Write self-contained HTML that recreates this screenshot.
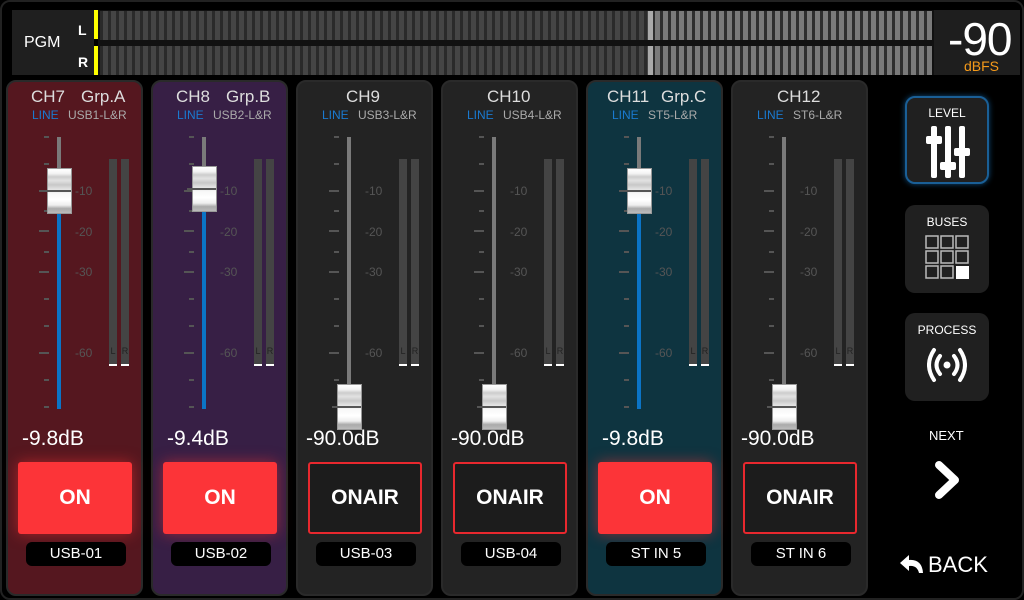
<!DOCTYPE html><html><head><meta charset="utf-8"><style>
*{margin:0;padding:0;box-sizing:border-box}
body{width:1024px;height:600px;background:#000;font-family:"Liberation Sans",sans-serif;color:#fff;position:relative;overflow:hidden}
.a{position:absolute}
.frame{left:0;top:0;width:1024px;height:600px;border:2px solid #222;border-radius:10px}
.pgm{left:12px;top:10px;width:82px;height:65px;background:#1f1f1f}
.bar{left:100px;width:832px;height:29px;background:repeating-linear-gradient(90deg,#2a2a2a 0 3px,#454545 3px 8px)}
.bar2{left:652px;width:280px;height:29px;background:repeating-linear-gradient(90deg,#2e2e2e 0 3px,#7a7a7a 3px 8px)}
.strip{top:80px;width:137px;height:516px;border:2px solid #2a2a2a;border-radius:10px;background:#232323}
.s{position:absolute;left:0;top:0;width:137px;height:516px}
.hd{position:absolute;top:5px;font-size:17px;color:#ddd}
.sub{position:absolute;top:26px;font-size:12px;color:#aaa}
.line{color:#1a7ad0}
.tk{position:absolute;height:2px;background:#555}
.trk{position:absolute;left:49px;top:55px;width:4px;height:272px;background:#7a7a7a}
.blue{position:absolute;left:49px;width:4px;background:#0b74c6}
.knob{position:absolute;left:39px;width:25px;height:46px;background:linear-gradient(#fff 0,#f4f4f4 10%,#ccc 18%,#e2e2e2 26%,#c8c8c8 36%,#ddd 44%,#f8f8f8 56%,#fff 70%,#eee 82%,#aaa 90%,#bbb 100%);border:1px solid #999}
.knob:after{content:"";position:absolute;left:-6px;right:0;top:21px;height:2px;background:#555}
.lb{position:absolute;left:67px;font-size:12px;color:#555}
.mt{position:absolute;top:77px;width:8px;height:207px;background:#444;border-bottom:2px solid #fff;font-size:9px;color:#222;text-align:center;padding-top:187px}
.db{position:absolute;left:14px;top:345px;font-size:21px}
.btn{position:absolute;left:10px;top:380px;width:114px;height:72px;border-radius:3px;font-weight:bold;font-size:21px;display:flex;align-items:center;justify-content:center}
.on{background:#fc3438;box-shadow:0 0 14px rgba(255,50,50,.5)}
.oa{border:2px solid #e8282e;background:#1c1c1c}
.pill{position:absolute;left:18px;top:460px;width:100px;height:24px;background:#000;border-radius:6px;font-size:15px;text-align:center;line-height:24px}
.rb{left:905px;width:84px;height:88px;background:#202020;border-radius:10px;font-size:12px;text-align:center;padding-top:10px}
</style></head><body>
<div class="a frame"></div>
<div class="a pgm"><div class="a" style="left:12px;top:24px;font-size:16px">PGM</div><div class="a" style="left:66px;top:12px;font-size:14px;font-weight:bold">L</div><div class="a" style="left:66px;top:44px;font-size:14px;font-weight:bold">R</div></div>
<div class="a" style="left:94px;top:10px;width:4px;height:29px;background:#ff0"></div>
<div class="a" style="left:94px;top:46px;width:4px;height:29px;background:#ff0"></div>
<div class="a" style="left:98px;top:10px;width:836px;height:65px;background:#111"></div>
<div class="a bar" style="top:11px"></div><div class="a bar" style="top:46px"></div>
<div class="a bar2" style="top:11px"></div><div class="a bar2" style="top:46px"></div>
<div class="a" style="left:648px;top:11px;width:5px;height:29px;background:#aaa"></div>
<div class="a" style="left:648px;top:46px;width:5px;height:29px;background:#aaa"></div>
<div class="a" style="left:934px;top:10px;width:86px;height:65px;background:#1e1e1e"></div>
<div class="a" style="left:948px;top:12px;font-size:46px;letter-spacing:-1px">-90</div>
<div class="a" style="left:964px;top:58px;font-size:14px;color:#f59a1a">dBFS</div>

<div class="a strip" style="left:6px;background:#55171f"><div class="s">
<div class="hd" style="left:23px">CH7</div><div class="hd" style="left:73px">Grp.A</div>
<div class="sub" style="left:24px"><span class="line">LINE</span></div><div class="sub" style="left:60px">USB1-L&amp;R</div>
<div class="tk" style="left:36px;top:54px;width:5px"></div><div class="tk" style="left:36px;top:81px;width:5px"></div><div class="tk" style="left:31px;top:108px;width:10px"></div><div class="tk" style="left:36px;top:128px;width:5px"></div><div class="tk" style="left:31px;top:148px;width:10px"></div><div class="tk" style="left:36px;top:169px;width:5px"></div><div class="tk" style="left:31px;top:189px;width:10px"></div><div class="tk" style="left:36px;top:216px;width:5px"></div><div class="tk" style="left:36px;top:243px;width:5px"></div><div class="tk" style="left:31px;top:270px;width:10px"></div><div class="tk" style="left:36px;top:297px;width:5px"></div><div class="tk" style="left:36px;top:324px;width:5px"></div>
<div class="trk"></div><div class="blue" style="top:120px;height:207px"></div>
<div class="lb" style="top:102px">-10</div><div class="lb" style="top:143px">-20</div><div class="lb" style="top:183px">-30</div><div class="lb" style="top:264px">-60</div>
<div class="knob" style="top:86px"></div>
<div class="mt" style="left:101px">L</div><div class="mt" style="left:113px">R</div>
<div class="db">-9.8dB</div><div class="btn on">ON</div><div class="pill">USB-01</div></div></div>

<div class="a strip" style="left:151px;background:#371f45"><div class="s">
<div class="hd" style="left:23px">CH8</div><div class="hd" style="left:73px">Grp.B</div>
<div class="sub" style="left:24px"><span class="line">LINE</span></div><div class="sub" style="left:60px">USB2-L&amp;R</div>
<div class="tk" style="left:36px;top:54px;width:5px"></div><div class="tk" style="left:36px;top:81px;width:5px"></div><div class="tk" style="left:31px;top:108px;width:10px"></div><div class="tk" style="left:36px;top:128px;width:5px"></div><div class="tk" style="left:31px;top:148px;width:10px"></div><div class="tk" style="left:36px;top:169px;width:5px"></div><div class="tk" style="left:31px;top:189px;width:10px"></div><div class="tk" style="left:36px;top:216px;width:5px"></div><div class="tk" style="left:36px;top:243px;width:5px"></div><div class="tk" style="left:31px;top:270px;width:10px"></div><div class="tk" style="left:36px;top:297px;width:5px"></div><div class="tk" style="left:36px;top:324px;width:5px"></div>
<div class="trk"></div><div class="blue" style="top:120px;height:207px"></div>
<div class="lb" style="top:102px">-10</div><div class="lb" style="top:143px">-20</div><div class="lb" style="top:183px">-30</div><div class="lb" style="top:264px">-60</div>
<div class="knob" style="top:84px"></div>
<div class="mt" style="left:101px">L</div><div class="mt" style="left:113px">R</div>
<div class="db">-9.4dB</div><div class="btn on">ON</div><div class="pill">USB-02</div></div></div>

<div class="a strip" style="left:296px"><div class="s">
<div class="hd" style="left:48px">CH9</div>
<div class="sub" style="left:24px"><span class="line">LINE</span></div><div class="sub" style="left:60px">USB3-L&amp;R</div>
<div class="tk" style="left:36px;top:54px;width:5px"></div><div class="tk" style="left:36px;top:81px;width:5px"></div><div class="tk" style="left:31px;top:108px;width:10px"></div><div class="tk" style="left:36px;top:128px;width:5px"></div><div class="tk" style="left:31px;top:148px;width:10px"></div><div class="tk" style="left:36px;top:169px;width:5px"></div><div class="tk" style="left:31px;top:189px;width:10px"></div><div class="tk" style="left:36px;top:216px;width:5px"></div><div class="tk" style="left:36px;top:243px;width:5px"></div><div class="tk" style="left:31px;top:270px;width:10px"></div><div class="tk" style="left:36px;top:297px;width:5px"></div><div class="tk" style="left:36px;top:324px;width:5px"></div>
<div class="trk"></div>
<div class="lb" style="top:102px">-10</div><div class="lb" style="top:143px">-20</div><div class="lb" style="top:183px">-30</div><div class="lb" style="top:264px">-60</div>
<div class="knob" style="top:302px"></div>
<div class="mt" style="left:101px">L</div><div class="mt" style="left:113px">R</div>
<div class="db" style="left:8px">-90.0dB</div><div class="btn oa">ONAIR</div><div class="pill">USB-03</div></div></div>

<div class="a strip" style="left:441px"><div class="s">
<div class="hd" style="left:44px">CH10</div>
<div class="sub" style="left:24px"><span class="line">LINE</span></div><div class="sub" style="left:60px">USB4-L&amp;R</div>
<div class="tk" style="left:36px;top:54px;width:5px"></div><div class="tk" style="left:36px;top:81px;width:5px"></div><div class="tk" style="left:31px;top:108px;width:10px"></div><div class="tk" style="left:36px;top:128px;width:5px"></div><div class="tk" style="left:31px;top:148px;width:10px"></div><div class="tk" style="left:36px;top:169px;width:5px"></div><div class="tk" style="left:31px;top:189px;width:10px"></div><div class="tk" style="left:36px;top:216px;width:5px"></div><div class="tk" style="left:36px;top:243px;width:5px"></div><div class="tk" style="left:31px;top:270px;width:10px"></div><div class="tk" style="left:36px;top:297px;width:5px"></div><div class="tk" style="left:36px;top:324px;width:5px"></div>
<div class="trk"></div>
<div class="lb" style="top:102px">-10</div><div class="lb" style="top:143px">-20</div><div class="lb" style="top:183px">-30</div><div class="lb" style="top:264px">-60</div>
<div class="knob" style="top:302px"></div>
<div class="mt" style="left:101px">L</div><div class="mt" style="left:113px">R</div>
<div class="db" style="left:8px">-90.0dB</div><div class="btn oa">ONAIR</div><div class="pill">USB-04</div></div></div>

<div class="a strip" style="left:586px;background:#0e3440"><div class="s">
<div class="hd" style="left:19px">CH11</div><div class="hd" style="left:73px">Grp.C</div>
<div class="sub" style="left:24px"><span class="line">LINE</span></div><div class="sub" style="left:60px">ST5-L&amp;R</div>
<div class="tk" style="left:36px;top:54px;width:5px"></div><div class="tk" style="left:36px;top:81px;width:5px"></div><div class="tk" style="left:31px;top:108px;width:10px"></div><div class="tk" style="left:36px;top:128px;width:5px"></div><div class="tk" style="left:31px;top:148px;width:10px"></div><div class="tk" style="left:36px;top:169px;width:5px"></div><div class="tk" style="left:31px;top:189px;width:10px"></div><div class="tk" style="left:36px;top:216px;width:5px"></div><div class="tk" style="left:36px;top:243px;width:5px"></div><div class="tk" style="left:31px;top:270px;width:10px"></div><div class="tk" style="left:36px;top:297px;width:5px"></div><div class="tk" style="left:36px;top:324px;width:5px"></div>
<div class="trk"></div><div class="blue" style="top:120px;height:207px"></div>
<div class="lb" style="top:102px">-10</div><div class="lb" style="top:143px">-20</div><div class="lb" style="top:183px">-30</div><div class="lb" style="top:264px">-60</div>
<div class="knob" style="top:86px"></div>
<div class="mt" style="left:101px">L</div><div class="mt" style="left:113px">R</div>
<div class="db">-9.8dB</div><div class="btn on">ON</div><div class="pill">ST IN 5</div></div></div>

<div class="a strip" style="left:731px"><div class="s">
<div class="hd" style="left:44px">CH12</div>
<div class="sub" style="left:24px"><span class="line">LINE</span></div><div class="sub" style="left:60px">ST6-L&amp;R</div>
<div class="tk" style="left:36px;top:54px;width:5px"></div><div class="tk" style="left:36px;top:81px;width:5px"></div><div class="tk" style="left:31px;top:108px;width:10px"></div><div class="tk" style="left:36px;top:128px;width:5px"></div><div class="tk" style="left:31px;top:148px;width:10px"></div><div class="tk" style="left:36px;top:169px;width:5px"></div><div class="tk" style="left:31px;top:189px;width:10px"></div><div class="tk" style="left:36px;top:216px;width:5px"></div><div class="tk" style="left:36px;top:243px;width:5px"></div><div class="tk" style="left:31px;top:270px;width:10px"></div><div class="tk" style="left:36px;top:297px;width:5px"></div><div class="tk" style="left:36px;top:324px;width:5px"></div>
<div class="trk"></div>
<div class="lb" style="top:102px">-10</div><div class="lb" style="top:143px">-20</div><div class="lb" style="top:183px">-30</div><div class="lb" style="top:264px">-60</div>
<div class="knob" style="top:302px"></div>
<div class="mt" style="left:101px">L</div><div class="mt" style="left:113px">R</div>
<div class="db" style="left:8px">-90.0dB</div><div class="btn oa">ONAIR</div><div class="pill">ST IN 6</div></div></div>

<div class="a rb" style="top:96px;border:2px solid #1a5f96;box-shadow:0 0 6px #0e4a7a;padding-top:8px">LEVEL
<svg class="a" style="left:18px;top:26px" width="46" height="56"><g fill="#fff"><rect x="6" y="2" width="6" height="52" rx="2"/><rect x="1" y="12" width="16" height="8" rx="2"/><rect x="20" y="2" width="6" height="52" rx="2"/><rect x="15" y="38" width="16" height="8" rx="2"/><rect x="34" y="2" width="6" height="52" rx="2"/><rect x="29" y="24" width="16" height="8" rx="2"/></g></svg></div>
<div class="a rb" style="top:205px">BUSES
<svg class="a" style="left:20px;top:30px" width="46" height="46"><g fill="none" stroke="#bbb" stroke-width="1.5"><rect x="1" y="1" width="12" height="12"/><rect x="16" y="1" width="12" height="12"/><rect x="31" y="1" width="12" height="12"/><rect x="1" y="16" width="12" height="12"/><rect x="16" y="16" width="12" height="12"/><rect x="31" y="16" width="12" height="12"/><rect x="1" y="31" width="12" height="12"/><rect x="16" y="31" width="12" height="12"/></g><rect x="31" y="31" width="13" height="13" fill="#fff"/></svg></div>
<div class="a rb" style="top:313px">PROCESS
<svg class="a" style="left:22px;top:34px" width="40" height="36"><g fill="none" stroke="#fff" stroke-width="4" stroke-linecap="round"><path d="M13 9 Q6 18 13 27"/><path d="M27 9 Q34 18 27 27"/><path d="M7 3 Q-3 18 7 33"/><path d="M33 3 Q43 18 33 33"/></g><circle cx="20" cy="18" r="3.5" fill="#fff"/></svg></div>
<div class="a" style="left:929px;top:428px;font-size:13px">NEXT</div>
<svg class="a" style="left:933px;top:459px" width="30" height="42"><path d="M6 6 L22 21 L6 36" fill="none" stroke="#fff" stroke-width="8" stroke-linecap="round" stroke-linejoin="round"/></svg>
<svg class="a" style="left:899px;top:553px" width="26" height="22"><path d="M10 2 L1 10 L10 18 L10 13 Q18 12 20 20 L24 20 Q23 6 10 7 Z" fill="#fff"/></svg>
<div class="a" style="left:928px;top:552px;font-size:22px">BACK</div>
</body></html>
